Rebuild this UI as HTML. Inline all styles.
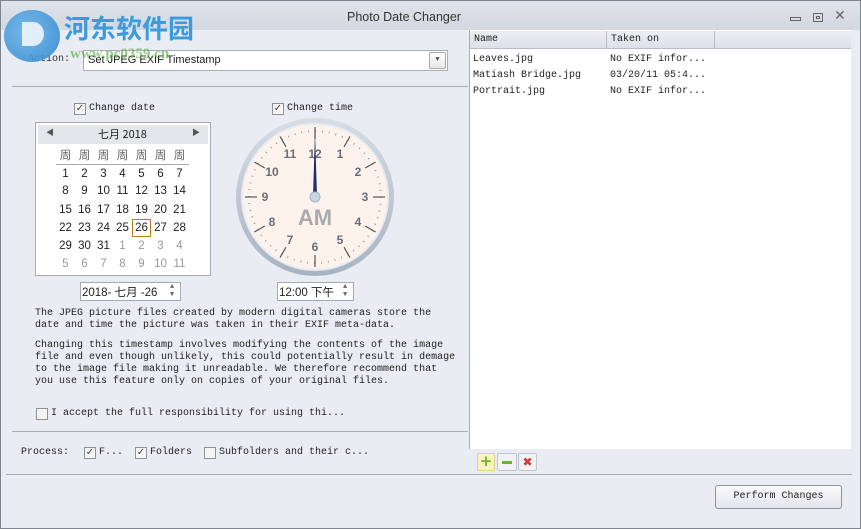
<!DOCTYPE html>
<html><head><meta charset="utf-8"><style>
*{margin:0;padding:0;box-sizing:border-box}
body{width:861px;height:529px;overflow:hidden;background:#e9ecf2;font-family:"Liberation Mono","Noto Sans CJK SC",monospace;font-size:10px;color:#222;position:relative}
.a{position:absolute}
.win{left:0;top:0;width:861px;height:529px;border:1px solid #7d8590;background:#e9ecf2}
.title{left:1px;top:1px;width:859px;height:29px;background:linear-gradient(#dfe3ea,#d3d8e0)}
.cb{position:absolute;width:12px;height:12px;border:1px solid #8e9299;background:#f4f4f4;font-size:10px;line-height:10px;text-align:center;color:#444;font-family:"DejaVu Sans",sans-serif}
.hl{position:absolute;height:1px;background:#a8adb5}
.cal td{width:19px;height:18.2px;text-align:center;font-family:"Liberation Sans","Noto Sans CJK SC",sans-serif;font-size:11.5px}
.g{color:#999}
.p{font-size:10px;line-height:12px;white-space:pre}
</style></head><body>
<div class="a win"></div>
<div class="a title"></div>
<div class="a" style="left:347px;top:10px;font-family:'Liberation Sans',sans-serif;font-size:12.5px;color:#333">Photo Date Changer</div>
<div class="a" style="left:790px;top:17px;width:11px;height:4px;border:1px solid #666"></div>
<div class="a" style="left:813px;top:13px;width:10px;height:9px;border:1px solid #666"><div style="margin:2px;width:4px;height:3px;border:1px solid #666"></div></div>
<div class="a" style="left:834px;top:8px;font-size:14px;color:#666;font-family:'DejaVu Sans',sans-serif">✕</div>
<div class="a" style="left:28px;top:54px;color:#333">Action:</div>
<div class="a" style="left:83px;top:50px;width:365px;height:21px;border:1px solid #a9adb4;background:#fff;font-family:'Liberation Sans',sans-serif;font-size:11px;padding:3px 4px">Set JPEG EXIF Timestamp</div>
<div class="a" style="left:429px;top:52px;width:17px;height:17px;border:1px solid #aaa;border-radius:2px;background:linear-gradient(#fff,#e4e6ea);font-size:7px;text-align:center;line-height:15px;color:#555">▼</div>
<!-- watermark logo -->
<div class="a" style="left:4px;top:10px;width:56px;height:52px;border-radius:50%;background:radial-gradient(circle at 40% 40%,#6cb4e8,#2b86cf);opacity:.9"></div>
<div class="a" style="left:22px;top:22px;width:22px;height:24px;background:#fff;border-radius:0 50% 50% 0;opacity:.8"></div>
<div class="a" style="left:64px;top:12px;font-family:'Noto Sans CJK SC',sans-serif;font-weight:bold;font-size:26px;color:#3a9be0;line-height:32px">河东软件园</div>
<div class="a" style="left:70px;top:46px;font-family:'Liberation Serif',serif;font-weight:bold;font-size:15px;color:#4ea83a;opacity:.6">www.pc0359.cn</div>
<div class="hl" style="left:12px;top:86px;width:456px"></div>
<div class="cb" style="left:74px;top:103px">✓</div><div class="a" style="left:89px;top:103px">Change date</div>
<div class="cb" style="left:272px;top:103px">✓</div><div class="a" style="left:287px;top:103px">Change time</div>
<!-- calendar -->
<div class="a" style="left:35px;top:122px;width:176px;height:154px;border:1px solid #a6abb3;background:#fff">
 <div style="margin:2px;height:19px;background:#e4e6ea;position:relative;font-family:'Noto Sans CJK SC',sans-serif;font-size:11px">
  <span class="a" style="left:8px;top:2px;font-size:8px;color:#555">◀</span>
  <span class="a" style="left:60px;top:1px">七月 2018</span>
  <span class="a" style="right:8px;top:2px;font-size:8px;color:#555">▶</span></div>
 <table class="cal" style="border-collapse:collapse;margin-left:20px;margin-top:0px">
 <tr style="color:#666;font-size:11px"><td style="border-bottom:1px solid #aaa">周</td><td style="border-bottom:1px solid #aaa">周</td><td style="border-bottom:1px solid #aaa">周</td><td style="border-bottom:1px solid #aaa">周</td><td style="border-bottom:1px solid #aaa">周</td><td style="border-bottom:1px solid #aaa">周</td><td style="border-bottom:1px solid #aaa">周</td></tr>
 <tr><td>1</td><td>2</td><td>3</td><td>4</td><td>5</td><td>6</td><td>7</td></tr>
 <tr><td>8</td><td>9</td><td>10</td><td>11</td><td>12</td><td>13</td><td>14</td></tr>
 <tr><td>15</td><td>16</td><td>17</td><td>18</td><td>19</td><td>20</td><td>21</td></tr>
 <tr><td>22</td><td>23</td><td>24</td><td>25</td><td style="outline:1px solid #c07a20;outline-offset:-1px">26</td><td>27</td><td>28</td></tr>
 <tr><td>29</td><td>30</td><td>31</td><td class="g">1</td><td class="g">2</td><td class="g">3</td><td class="g">4</td></tr>
 <tr class="g"><td>5</td><td>6</td><td>7</td><td>8</td><td>9</td><td>10</td><td>11</td></tr>
 </table>
</div>
<div class="a" style="left:80px;top:282px;width:101px;height:19px;border:1px solid #a6abb3;background:#fff;font-family:'Liberation Sans','Noto Sans CJK SC',sans-serif;font-size:11.5px;padding:1px 1px">2018- 七月 -26</div>
<div class="a" style="left:170px;top:283px;font-size:7px;color:#666;line-height:8px">▲<br>▼</div>
<div class="a" style="left:277px;top:282px;width:77px;height:19px;border:1px solid #a6abb3;background:#fff;font-family:'Liberation Sans','Noto Sans CJK SC',sans-serif;font-size:11.5px;padding:1px 1px">12:00 下午</div>
<div class="a" style="left:343px;top:283px;font-size:7px;color:#666;line-height:8px">▲<br>▼</div>
<!-- clock -->
<svg class="a" style="left:230px;top:113px" width="170" height="170" viewBox="-85 -84 170 170">
<defs><linearGradient id="r" x1="0" y1="0" x2="0" y2="1"><stop offset="0" stop-color="#d6dde6"/><stop offset="1" stop-color="#a8b3c1"/></linearGradient></defs>
<circle r="79" fill="url(#r)"/><circle r="74" fill="#e9edf2"/><circle r="72" fill="#fdf3ec"/>
<circle r="66" fill="none" stroke="#8a8f99" stroke-width="2" stroke-dasharray="0.8 6.11"/>
<g stroke="#555" stroke-width="1.2">
<line y1="-58" y2="-70"/><line y1="-58" y2="-70" transform="rotate(30)"/><line y1="-58" y2="-70" transform="rotate(60)"/><line y1="-58" y2="-70" transform="rotate(90)"/><line y1="-58" y2="-70" transform="rotate(120)"/><line y1="-58" y2="-70" transform="rotate(150)"/><line y1="-58" y2="-70" transform="rotate(180)"/><line y1="-58" y2="-70" transform="rotate(210)"/><line y1="-58" y2="-70" transform="rotate(240)"/><line y1="-58" y2="-70" transform="rotate(270)"/><line y1="-58" y2="-70" transform="rotate(300)"/><line y1="-58" y2="-70" transform="rotate(330)"/></g>
<g font-family="Liberation Sans" font-weight="bold" font-size="12" fill="#6a6e78" text-anchor="middle">
<text x="25" y="-39">1</text><text x="43" y="-21">2</text><text x="50" y="4">3</text><text x="43" y="29">4</text><text x="25" y="47">5</text><text x="0" y="54">6</text><text x="-25" y="47">7</text><text x="-43" y="29">8</text><text x="-50" y="4">9</text><text x="-43" y="-21">10</text><text x="-25" y="-39">11</text><text x="0" y="-39">12</text></g>
<text x="0" y="28" text-anchor="middle" font-family="Liberation Sans" font-weight="bold" font-size="22" fill="#aaa">AM</text>
<polygon points="-2,0 0,-66 2,0" fill="#1c2f6e"/>
<circle r="5" fill="#c9d6e6" stroke="#9fb0c6"/>
</svg>
<div class="a p" style="left:35px;top:308px">The JPEG picture files created by modern digital cameras store the
date and time the picture was taken in their EXIF meta-data.</div>
<div class="a p" style="left:35px;top:340px">Changing this timestamp involves modifying the contents of the image
file and even though unlikely, this could potentially result in demage
to the image file making it unreadable. We therefore recommend that
you use this feature only on copies of your original files.</div>
<div class="cb" style="left:36px;top:408px"></div><div class="a" style="left:51px;top:408px">I accept the full responsibility for using thi...</div>
<div class="hl" style="left:12px;top:431px;width:456px"></div>
<div class="a" style="left:21px;top:447px">Process:</div>
<div class="cb" style="left:84px;top:447px">✓</div><div class="a" style="left:99px;top:447px">F...</div>
<div class="cb" style="left:135px;top:447px">✓</div><div class="a" style="left:150px;top:447px">Folders</div>
<div class="cb" style="left:204px;top:447px"></div><div class="a" style="left:219px;top:447px">Subfolders and their c...</div>
<!-- list -->
<div class="a" style="left:469px;top:30px;width:382px;height:419px;background:#fff;border-left:1px solid #aab"></div>
<div class="a" style="left:470px;top:31px;width:381px;height:18px;background:linear-gradient(#eceef2,#dde0e6);border-bottom:1px solid #b8bcc4"></div>
<div class="a" style="left:606px;top:31px;width:1px;height:18px;background:#b8bcc4"></div>
<div class="a" style="left:714px;top:31px;width:1px;height:18px;background:#b8bcc4"></div>
<div class="a" style="left:474px;top:34px">Name</div><div class="a" style="left:611px;top:34px">Taken on</div>
<div class="a p" style="left:473px;top:52px;line-height:16px">Leaves.jpg
Matiash Bridge.jpg
Portrait.jpg</div>
<div class="a p" style="left:610px;top:52px;line-height:16px">No EXIF infor...
03/20/11 05:4...
No EXIF infor...</div>
<div class="a" style="left:477px;top:453px;width:18px;height:18px;border:1px solid #e0d48a;background:#faf3c0;border-radius:2px;color:#6db32e;font-weight:bold;font-size:15px;line-height:15px;text-align:center;font-family:'DejaVu Sans',sans-serif">+</div>
<div class="a" style="left:497px;top:453px;width:20px;height:18px;border:1px solid #c0c4cc;background:#f0f2f5;border-radius:2px"><div style="margin:7px 4px;height:3px;background:#6db32e"></div></div>
<div class="a" style="left:518px;top:453px;width:19px;height:18px;border:1px solid #c0c4cc;background:#f0f2f5;border-radius:2px;color:#d9383a;font-weight:bold;font-size:12px;line-height:16px;text-align:center;font-family:'DejaVu Sans',sans-serif">✖</div>
<div class="hl" style="left:6px;top:474px;width:846px"></div>
<div class="a" style="left:715px;top:485px;width:127px;height:24px;border:1px solid #8d939c;border-radius:3px;background:linear-gradient(#fbfbfc,#e2e5ea);text-align:center;line-height:22px">Perform Changes</div>
</body></html>
